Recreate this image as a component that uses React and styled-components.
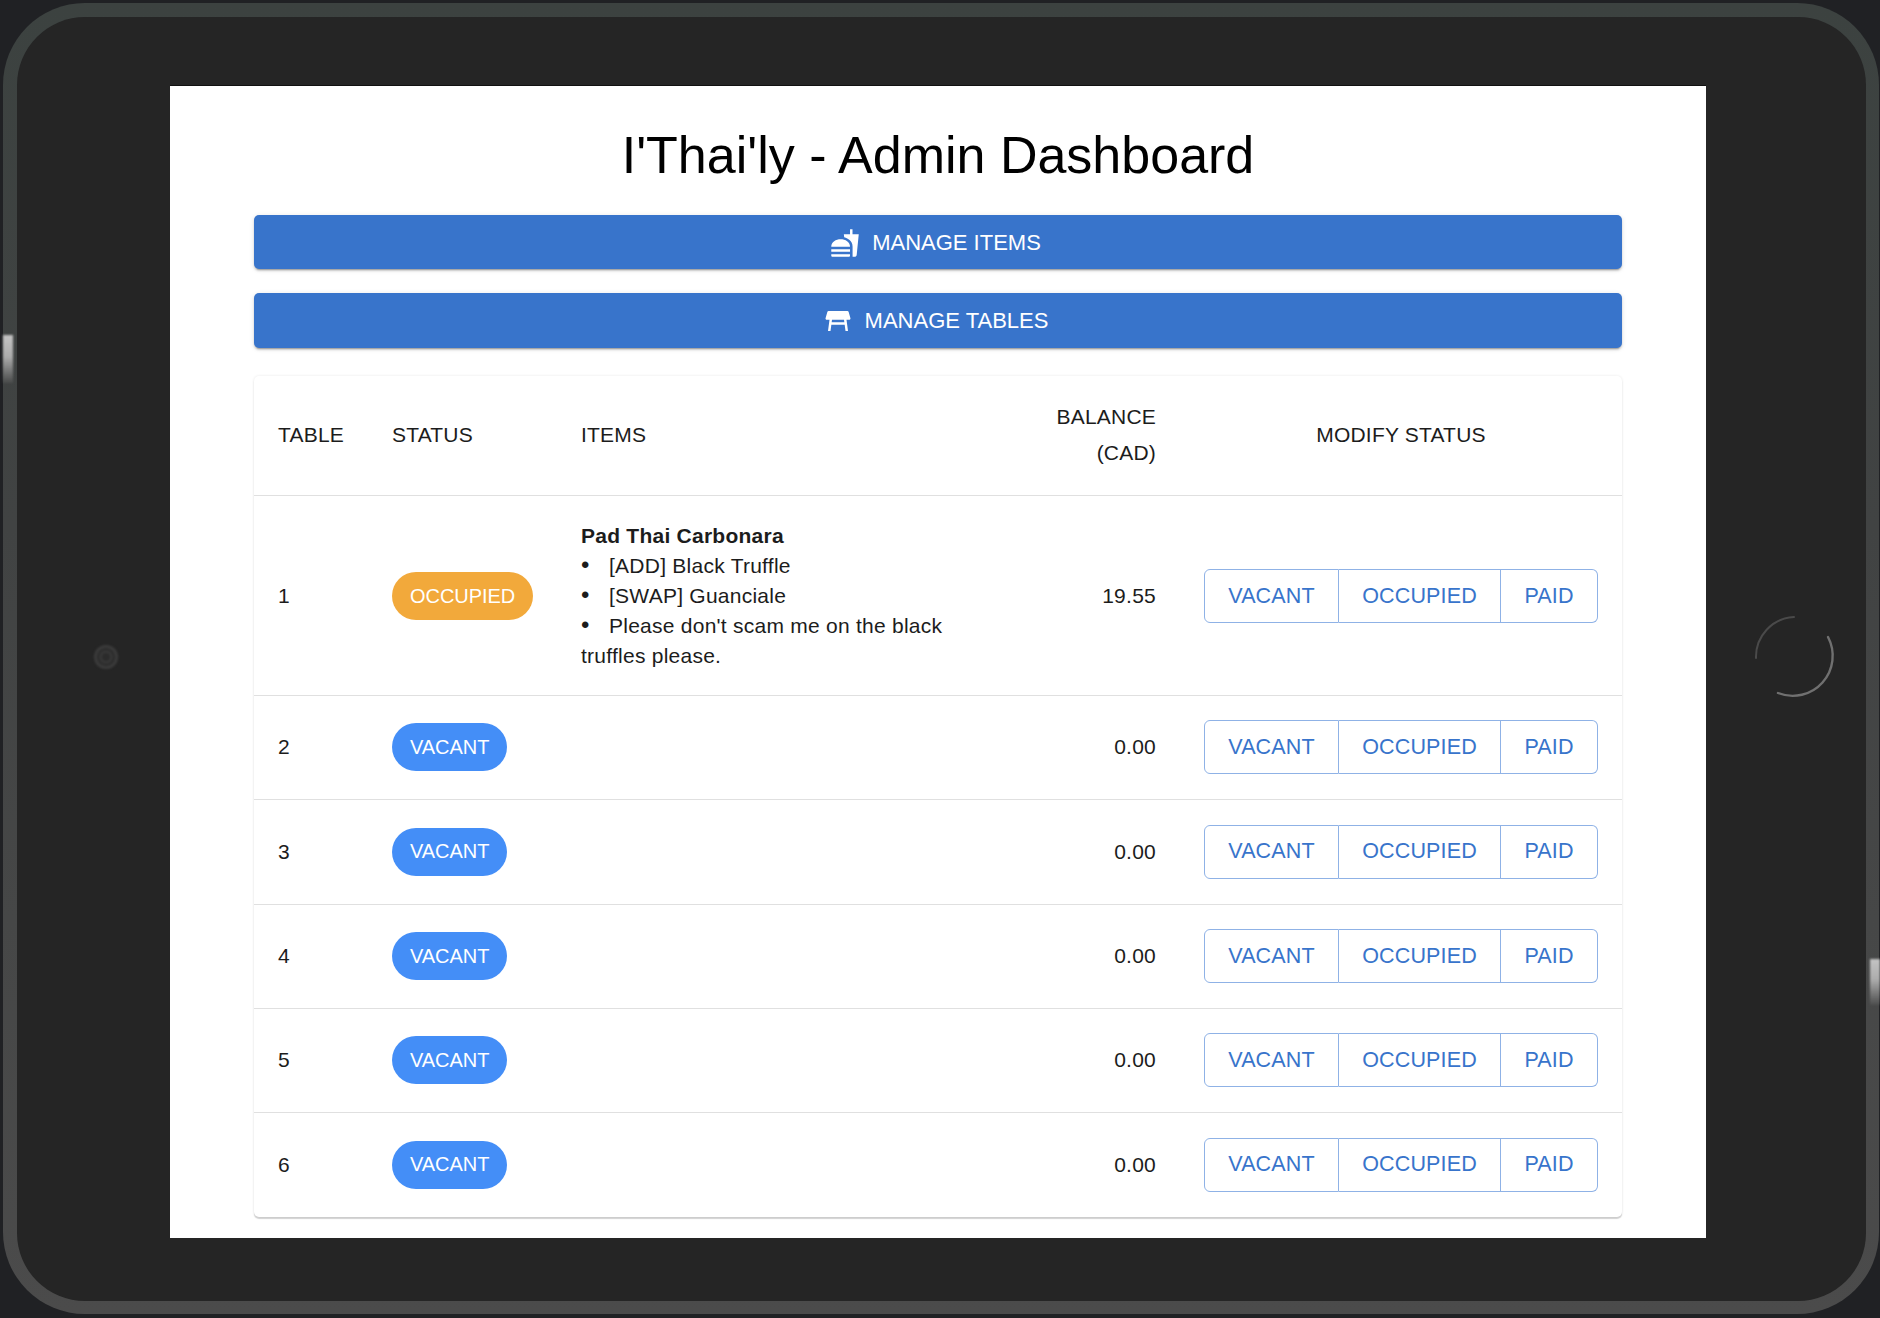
import React from 'react';
import styled, { createGlobalStyle } from 'styled-components';
import { MdFastfood, MdTableRestaurant } from 'react-icons/md';

const Global = createGlobalStyle`
  html, body { margin: 0; padding: 0; background: #202124; }
  * { box-sizing: border-box; }
  body { font-family: "Liberation Sans", Arial, sans-serif; color: #1c1c1c; }
`;

const Device = styled.div`
  position: relative;
  width: 1876px;
  height: 1311px;
  margin: 3px 0 0 3px;
  padding: 14px 13px 13px 14px;
  border-radius: 82px;
  background: linear-gradient(180deg, #3c4240 0%, #414343 40%, #4b4b4b 100%);
`;

const Bezel = styled.div`
  width: 100%;
  height: 100%;
  border-radius: 68px;
  background: #252525;
  padding: 69px 0 0 153px;
`;

const Screen = styled.main`
  width: 1536px;
  height: 1152px;
  background: #fff;
  box-shadow: 0 -1px 0 #111;
  padding: 0 84px;
  display: flex;
  flex-direction: column;
`;

const Title = styled.h1`
  margin: 0;
  height: 129px;
  display: flex;
  align-items: center;
  justify-content: center;
  font-size: 52px;
  font-weight: 400;
  color: #000;
  padding-top: 9px;
`;

const ActionButton = styled.button`
  display: flex;
  align-items: center;
  justify-content: center;
  gap: 12px;
  width: 100%;
  height: ${p => p.$h}px;
  margin-bottom: ${p => p.$mb}px;
  padding: 1px 5px 0 0;
  border: 0;
  border-radius: 5px;
  background: #3874cb;
  color: #fff;
  font-family: inherit;
  font-size: 22px;
  box-shadow: 0 3px 1px -2px rgba(0,0,0,.2), 0 2px 2px 0 rgba(0,0,0,.14), 0 1px 5px 0 rgba(0,0,0,.12);
  svg { width: 30px; height: 30px; }
`;

const Card = styled.section`
  border-radius: 5px;
  background: #fff;
  box-shadow: 0 2px 1px 0 rgba(0,0,0,.17), 0 0 3px 0 rgba(0,0,0,.09);
  overflow: hidden;
`;

const Table = styled.table`
  width: 100%;
  border-collapse: collapse;
  table-layout: fixed;
  font-size: 21px;
`;

const Head = styled.th`
  height: 119px;
  padding: 0 24px;
  font-weight: 400;
  line-height: 36px;
  letter-spacing: 0.2px;
  text-align: ${p => p.$align || 'left'};
  border-bottom: 1px solid #e0e0e0;
`;

const Row = styled.tr`
  height: ${p => p.$h}px;
  border-bottom: ${p => (p.$last ? '0' : '1px solid #e0e0e0')};
  td { padding-top: ${p => p.$pt || 0}px; }
`;

const Cell = styled.td`
  padding: 0 24px;
  line-height: 30px;
  letter-spacing: 0.25px;
  text-align: ${p => p.$align || 'left'};
  vertical-align: middle;
`;

const Chip = styled.span`
  display: inline-flex;
  align-items: center;
  height: 48px;
  padding: 0 18px 1px;
  border-radius: 24px;
  background: ${p => (p.$busy ? '#f2a93b' : '#448ef7')};
  color: #fff;
  font-size: 20px;
  letter-spacing: -0.05px;
  vertical-align: middle;
`;

const ItemName = styled.strong`
  display: block;
  font-weight: 700;
`;

const ItemLine = styled.div``;

const Bullet = styled.span`
  display: inline-block;
  width: 28px;
  font-size: 24px;
  line-height: 1;
`;

const Group = styled.div`
  display: flex;
  height: 54px;
`;

const GroupButton = styled.button`
  width: ${p => p.$w}px;
  padding: 0;
  background: #fff;
  color: #3874cb;
  font-family: inherit;
  font-size: 21.5px;
  letter-spacing: 0.15px;
  border: 1.5px solid #8fb2e6;
  border-left-width: ${p => (p.$first ? '1.5px' : '0')};
  border-radius: ${p => p.$radius};
`;

const Ring = styled.svg`
  position: absolute;
  left: 1746px;
  top: 609px;
  width: 90px;
  height: 90px;
  filter: blur(0.6px);
`;

const Camera = styled.div`
  position: absolute;
  left: 91px;
  top: 642px;
  width: 24px;
  height: 24px;
  border-radius: 50%;
  filter: blur(1px);
  background: radial-gradient(circle, #2b2b2b 0 22%, #3a3a3a 28% 32%, #2c2c2c 42% 50%, #3c3c3c 58% 100%);
`;

const SideKey = styled.div`
  position: absolute;
  left: ${p => p.$x}px;
  top: ${p => p.$y}px;
  width: 10px;
  height: ${p => p.$h}px;
  filter: blur(1px);
  background: linear-gradient(180deg, #c4c4c4 0%, #acacac 45%, rgba(90,90,90,.35) 100%);
`;

const tables = [2, 3, 4, 5, 6];
const heights = [104, 105, 104, 104, 105];

const StatusGroup = () => (
  <Group>
    <GroupButton $w={135} $first $radius="6px 0 0 6px">VACANT</GroupButton>
    <GroupButton $w={162} $radius="0">OCCUPIED</GroupButton>
    <GroupButton $w={97} $radius="0 6px 6px 0">PAID</GroupButton>
  </Group>
);

export default function App() {
  return (
    <>
      <Global />
      <Device>
        <Bezel>
          <Screen>
            <Title>I'Thai'ly - Admin Dashboard</Title>
            <ActionButton $h={54} $mb={24}><MdFastfood />MANAGE ITEMS</ActionButton>
            <ActionButton $h={55} $mb={28}><MdTableRestaurant />MANAGE TABLES</ActionButton>
            <Card>
              <Table>
                <colgroup>
                  <col style={{ width: 114 }} />
                  <col style={{ width: 189 }} />
                  <col style={{ width: 475 }} />
                  <col style={{ width: 148 }} />
                  <col style={{ width: 442 }} />
                </colgroup>
                <thead>
                  <tr>
                    <Head>TABLE</Head>
                    <Head>STATUS</Head>
                    <Head>ITEMS</Head>
                    <Head $align="right">BALANCE (CAD)</Head>
                    <Head $align="center">MODIFY STATUS</Head>
                  </tr>
                </thead>
                <tbody>
                  <Row $h={200} $pt={2}>
                    <Cell>1</Cell>
                    <Cell><Chip $busy>OCCUPIED</Chip></Cell>
                    <Cell>
                      <ItemName>Pad Thai Carbonara</ItemName>
                      <ItemLine><Bullet>•</Bullet>[ADD] Black Truffle</ItemLine>
                      <ItemLine><Bullet>•</Bullet>[SWAP] Guanciale</ItemLine>
                      <ItemLine><Bullet>•</Bullet>Please don't scam me on the black truffles please.</ItemLine>
                    </Cell>
                    <Cell $align="right">19.55</Cell>
                    <Cell><StatusGroup /></Cell>
                  </Row>
                  {tables.map((n, i) => (
                    <Row key={n} $h={heights[i]} $last={n === 6}>
                      <Cell>{n}</Cell>
                      <Cell><Chip>VACANT</Chip></Cell>
                      <Cell />
                      <Cell $align="right">0.00</Cell>
                      <Cell><StatusGroup /></Cell>
                    </Row>
                  ))}
                </tbody>
              </Table>
            </Card>
          </Screen>
        </Bezel>
        <Camera />
        <Ring viewBox="0 0 90 90" fill="none">
          <path d="M7 46 A40 40 0 0 1 45 5" stroke="#4a4a4a" strokeWidth="2" strokeLinecap="round" />
          <path d="M79 25 A40 40 0 0 1 29 81" stroke="#707070" strokeWidth="2.4" strokeLinecap="round" />
        </Ring>
        <SideKey $x={0} $y={332} $h={48} />
        <SideKey $x={1867} $y={956} $h={46} />
      </Device>
    </>
  );
}
